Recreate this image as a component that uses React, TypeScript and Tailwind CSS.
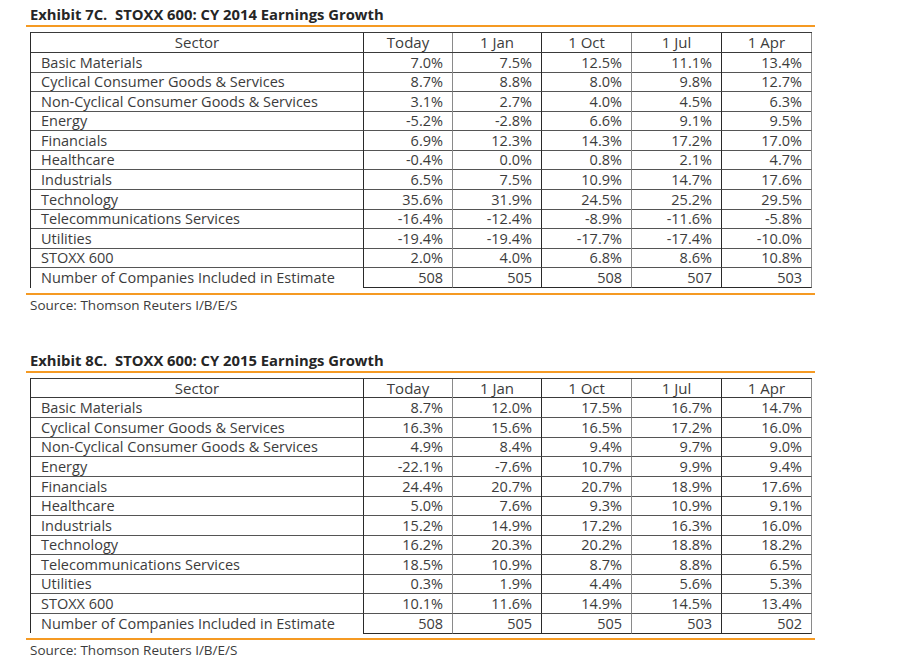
import React from 'react';

type Row = { sector: string; values: string[] };

const headers = ['Today', '1 Jan', '1 Oct', '1 Jul', '1 Apr'];

const table2014: Row[] = [
  { sector: 'Basic Materials', values: ['7.0%', '7.5%', '12.5%', '11.1%', '13.4%'] },
  { sector: 'Cyclical Consumer Goods & Services', values: ['8.7%', '8.8%', '8.0%', '9.8%', '12.7%'] },
  { sector: 'Non-Cyclical Consumer Goods & Services', values: ['3.1%', '2.7%', '4.0%', '4.5%', '6.3%'] },
  { sector: 'Energy', values: ['-5.2%', '-2.8%', '6.6%', '9.1%', '9.5%'] },
  { sector: 'Financials', values: ['6.9%', '12.3%', '14.3%', '17.2%', '17.0%'] },
  { sector: 'Healthcare', values: ['-0.4%', '0.0%', '0.8%', '2.1%', '4.7%'] },
  { sector: 'Industrials', values: ['6.5%', '7.5%', '10.9%', '14.7%', '17.6%'] },
  { sector: 'Technology', values: ['35.6%', '31.9%', '24.5%', '25.2%', '29.5%'] },
  { sector: 'Telecommunications Services', values: ['-16.4%', '-12.4%', '-8.9%', '-11.6%', '-5.8%'] },
  { sector: 'Utilities', values: ['-19.4%', '-19.4%', '-17.7%', '-17.4%', '-10.0%'] },
  { sector: 'STOXX 600', values: ['2.0%', '4.0%', '6.8%', '8.6%', '10.8%'] },
  { sector: 'Number of Companies Included in Estimate', values: ['508', '505', '508', '507', '503'] },
];

const table2015: Row[] = [
  { sector: 'Basic Materials', values: ['8.7%', '12.0%', '17.5%', '16.7%', '14.7%'] },
  { sector: 'Cyclical Consumer Goods & Services', values: ['16.3%', '15.6%', '16.5%', '17.2%', '16.0%'] },
  { sector: 'Non-Cyclical Consumer Goods & Services', values: ['4.9%', '8.4%', '9.4%', '9.7%', '9.0%'] },
  { sector: 'Energy', values: ['-22.1%', '-7.6%', '10.7%', '9.9%', '9.4%'] },
  { sector: 'Financials', values: ['24.4%', '20.7%', '20.7%', '18.9%', '17.6%'] },
  { sector: 'Healthcare', values: ['5.0%', '7.6%', '9.3%', '10.9%', '9.1%'] },
  { sector: 'Industrials', values: ['15.2%', '14.9%', '17.2%', '16.3%', '16.0%'] },
  { sector: 'Technology', values: ['16.2%', '20.3%', '20.2%', '18.8%', '18.2%'] },
  { sector: 'Telecommunications Services', values: ['18.5%', '10.9%', '8.7%', '8.8%', '6.5%'] },
  { sector: 'Utilities', values: ['0.3%', '1.9%', '4.4%', '5.6%', '5.3%'] },
  { sector: 'STOXX 600', values: ['10.1%', '11.6%', '14.9%', '14.5%', '13.4%'] },
  { sector: 'Number of Companies Included in Estimate', values: ['508', '505', '505', '503', '502'] },
];

const colBorder = ['border-r-[#8a8a8a]', 'border-r-[#2a2a2a]', 'border-r-[#8a8a8a]', 'border-r-[#2a2a2a]', 'border-r-[#8a8a8a]'];

const EarningsTable: React.FC<{ title: string; rows: Row[] }> = ({ title, rows }) => {
  return (
    <div>
      <div className="pl-[30px] h-[19px] leading-[19px] text-[14.8px] font-bold text-[#262626] whitespace-pre">
        {title}
      </div>
      <div className="ml-[26px] mt-[1px] w-[789px] h-[2px] bg-[#f59a23]"></div>

      <div className="ml-[30px] mt-[5px] w-[782px] border-l border-l-[#2a2a2a] border-t border-t-[#3a3a3a] text-[14.5px] text-[#3c3c3c]">
        {/* Header */}
        <div className="grid grid-cols-[333px_89px_89px_90px_90px_90px] h-[19.5px] leading-[19px] border-b border-b-[#3a3a3a] text-[15px]">
          <div className="text-center border-r border-r-[#2a2a2a]">Sector</div>
          {headers.map((h, i) => (
            <div key={h} className={`text-center border-r ${colBorder[i]}`}>
              {h}
            </div>
          ))}
        </div>
        {rows.map((r, idx) => {
          const last = idx === rows.length - 1;
          return (
            <div
              key={r.sector}
              className="grid grid-cols-[333px_89px_89px_90px_90px_90px] h-[19.6px] leading-[19px]"
            >
              <div
                className={`pl-[10px] whitespace-nowrap border-r border-r-[#2a2a2a] ${
                  last ? '' : 'border-b border-b-[#555555]'
                }`}
              >
                {r.sector}
              </div>
              {r.values.map((v, i) => (
                <div
                  key={i}
                  className={`text-right pr-[9px] border-r ${colBorder[i]} border-b ${
                    last ? 'border-b-[#2a2a2a]' : 'border-b-[#555555]'
                  }`}
                >
                  {v}
                </div>
              ))}
            </div>
          );
        })}
      </div>

      <div className="ml-[26px] mt-[5px] w-[789px] h-[2px] bg-[#f59a23]"></div>
      <div className="pl-[30px] mt-[2px] h-[17px] leading-[17px] text-[13.5px] text-[#3c3c3c]">
        Source: Thomson Reuters I/B/E/S
      </div>
    </div>
  );
};

const App: React.FC = () => {
  return (
    <div className="w-[903px] h-[672px] bg-white overflow-hidden font-['Open_Sans',_'Liberation_Sans',_sans-serif]">
      <div className="pt-[5px]">
        <EarningsTable title="Exhibit 7C.  STOXX 600: CY 2014 Earnings Growth" rows={table2014} />
      </div>
      <div className="mt-[37px]">
        <EarningsTable title="Exhibit 8C.  STOXX 600: CY 2015 Earnings Growth" rows={table2015} />
      </div>
    </div>
  );
};

export default App;
